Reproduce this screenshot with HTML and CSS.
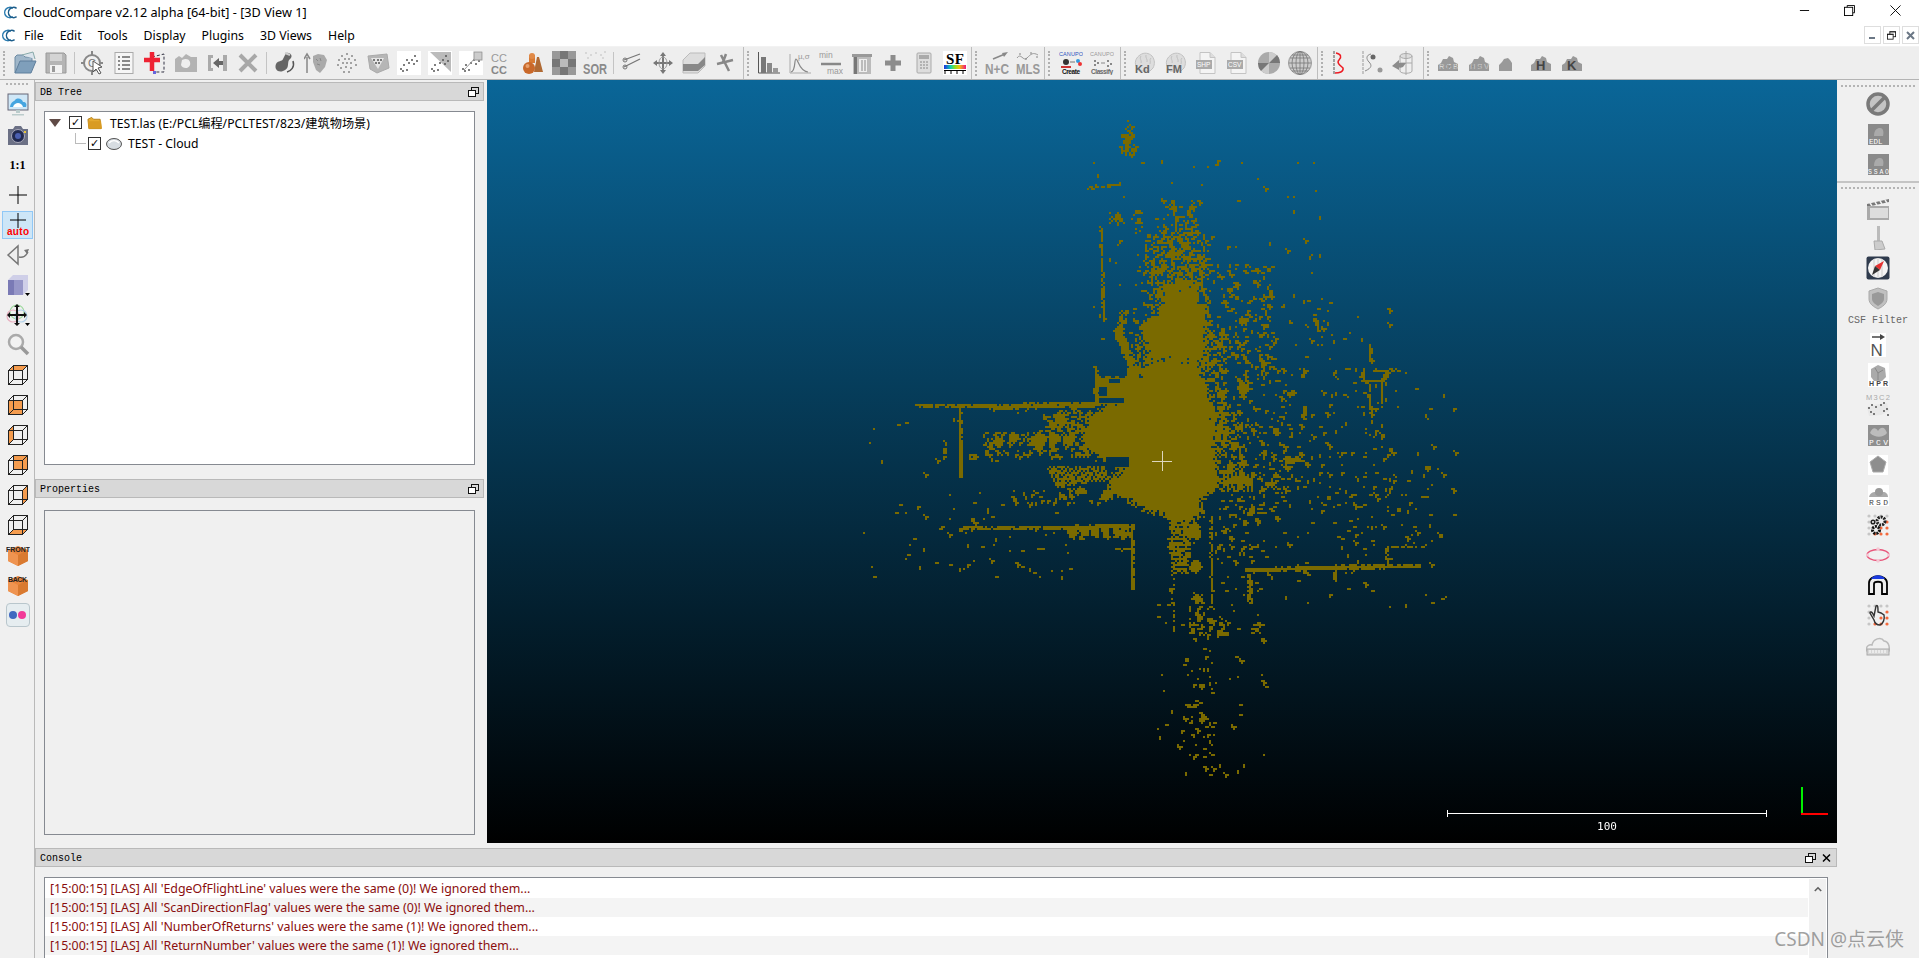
FILE: index.html
```html
<!DOCTYPE html>
<html lang="en">
<head>
<meta charset="utf-8">
<title>CloudCompare v2.12 alpha [64-bit] - [3D View 1]</title>
<link rel="stylesheet" href="styles.css">
</head>
<body>
<svg class="defs" width="0" height="0" aria-hidden="true">
  <defs>
    <g id="cc-logo"><path d="M10.500 3.500A5.500 5.500 0 1 0 10.500 12.500" fill="none" stroke="#2b7cb0" stroke-width="1.600"/><path d="M14.500 3.500A5.500 5.500 0 1 0 14.500 12.500" fill="none" stroke="#1c5d8a" stroke-width="1.600"/></g>
    <g id="wire" fill="none" stroke="#222" stroke-width="1"><rect x="2.5" y="7.5" width="14" height="14"/><rect x="7.5" y="2.5" width="14" height="14"/><path d="M2.5 7.5l5-5M16.5 7.5l5-5M2.5 21.5l5-5M16.5 21.5l5-5"/></g>
    <g id="float"><rect x="3.5" y="0.5" width="7" height="6" fill="none" stroke="#111"/><rect x="0.5" y="3.5" width="7" height="6" fill="#fff" stroke="#111"/><path d="M3 .5h8M0 3.5h8" stroke="#111"/></g>
    <g id="hexcube"><path d="M12 3l10 4v11l-10 5-10-5V7z" fill="#e8853c"/><path d="M12 12l10-5v11l-10 5z" fill="#d97a30"/><path d="M2 7l10 5v11l-10-5z" fill="#ef9450"/></g>
    <g id="dotcloud" fill="#555"><circle cx="4" cy="18" r="1"/><circle cx="7" cy="14" r="1"/><circle cx="6" cy="20" r="1"/><circle cx="10" cy="19" r="1"/><circle cx="12" cy="12" r="1"/><circle cx="15" cy="9" r="1"/><circle cx="18" cy="5" r="1"/><circle cx="20" cy="10" r="1"/><circle cx="17" cy="13" r="1"/></g>
    <g id="brain"><path d="M3 15c-2-5 1-9 4-11 4-3 9-2 12 1 3 4 3 8 1 12l-3 3H6z" fill="#ddd" stroke="#c2c2c2"/><path d="M8 5c-2 3 1 4 0 7M13 4c-1 3 2 4 1 7M18 7c-2 2 0 3-1 6" fill="none" stroke="#c2c2c2"/></g>
    <g id="doc"><path d="M5 1.5h10l5 5v16H5z" fill="#f4f4f4" stroke="#c4c4c4"/><path d="M15 1.5v5h5" fill="#ddd" stroke="#c4c4c4"/><rect x="1" y="9" width="16" height="9" fill="#aaa"/></g>
    <g id="tcloud"><path d="M2 20v-6l3-2 2-4 4 0 2-3 4 2 1 4 4 2v7z" fill="#999"/></g>
    <g id="dotgrid" fill="#c6c6c6"><circle cx="3" cy="3" r="1.6"/><circle cx="9" cy="3" r="1.6"/><circle cx="15" cy="3" r="1.6"/><circle cx="21" cy="3" r="1.6"/><circle cx="3" cy="9" r="1.6"/><circle cx="3" cy="15" r="1.6"/><circle cx="3" cy="21" r="1.6"/><circle cx="9" cy="21" r="1.6" fill="#f4693c"/><circle cx="15" cy="21" r="1.6" fill="#f4693c"/><circle cx="21" cy="21" r="1.6" fill="#f4693c"/><circle cx="21" cy="9" r="1.6" fill="#f4693c"/><circle cx="21" cy="15" r="1.6" fill="#f4693c"/><circle cx="15" cy="15" r="1.6" fill="#f4693c"/></g>
  </defs>
</svg>

<header class="titlebar">
  <svg class="logo" viewBox="0 0 16 16"><use href="#cc-logo"/></svg>
  <span class="title">CloudCompare v2.12 alpha [64-bit] - [3D View 1]</span>
  <div class="winbtns">
    <svg class="winbtn" viewBox="0 0 12 12"><path d="M1 6h10" stroke="#000" fill="none"/></svg>
    <svg class="winbtn" viewBox="0 0 12 12"><path d="M3.5 2.5v-2h8v8h-2" stroke="#000" fill="none"/><rect x="0.5" y="2.5" width="9" height="9" stroke="#000" fill="#fff"/></svg>
    <svg class="winbtn" viewBox="0 0 12 12"><path d="M.5.5l11 11M11.5.5l-11 11" stroke="#000" fill="none"/></svg>
  </div>
</header>

<nav class="menubar">
  <svg class="menu-logo" viewBox="0 0 16 16"><use href="#cc-logo"/></svg>
  <span class="menu-item">File</span>
  <span class="menu-item">Edit</span>
  <span class="menu-item">Tools</span>
  <span class="menu-item">Display</span>
  <span class="menu-item">Plugins</span>
  <span class="menu-item">3D Views</span>
  <span class="menu-item">Help</span>
  <div class="mdi">
    <span class="mdi-btn"><svg viewBox="0 0 9 9" class="mdi-ic"><path d="M1 7h6" stroke="#6b7785" stroke-width="2"/></svg></span>
    <span class="mdi-btn"><svg viewBox="0 0 11 10" class="mdi-ic"><use href="#float"/></svg></span>
    <span class="mdi-btn"><svg viewBox="0 0 9 9" class="mdi-ic"><path d="M1 1l7 7M8 1l-7 7" stroke="#6b7785" stroke-width="2"/></svg></span>
  </div>
</nav>

<div class="toolbar">
  <div class="tg tg-first">
    <span class="tb"><svg class="ic" viewBox="0 0 24 24"><path d="M2 22V6l2-2h6l2 2h7v4" fill="#9fb6c9" stroke="#6d8aa3"/><path d="M2 22l5-12h16l-5 12z" fill="#7f9fbb" stroke="#5f7f9c"/><path d="M9 4l11-3 2 7" fill="#dbe4ec" stroke="#8aa"/></svg></span>
    <span class="tb"><svg class="ic" viewBox="0 0 24 24"><path d="M2 2h18l2 2v18H2z" fill="#b5b5b5" stroke="#999"/><rect x="6" y="3" width="12" height="7" fill="#d4d4d4"/><rect x="6" y="14" width="12" height="8" fill="#f2f2f2"/><rect x="8" y="15" width="3" height="6" fill="#999"/></svg></span>
    <span class="tsep"></span>
    <span class="tb"><svg class="ic" viewBox="0 0 24 24"><circle cx="11" cy="12" r="8" fill="#f1f1f1" stroke="#888" stroke-width="2"/><path d="M11 0v5M11 19v5M0 12h4M18 12h4" stroke="#888" stroke-width="2"/><text x="7" y="16" font-size="11" fill="#777" class="st">C</text><path d="M12 10l9 6-4 1 3 5-2 1-3-5-3 3z" fill="#fff" stroke="#555"/></svg></span>
    <span class="tb"><svg class="ic" viewBox="0 0 24 24"><rect x="3" y="1.5" width="18" height="21" fill="#f6f6f6" stroke="#aaa"/><path d="M6 6h2M10 6h8M6 10h2M10 10h8M6 14h2M10 14h8M6 18h2M10 18h8" stroke="#666" stroke-width="1.5"/></svg></span>
    <span class="tb"><svg class="ic" viewBox="0 0 24 24"><path d="M9 6l12-3v18H11" fill="none" stroke="#334" stroke-dasharray="3 2"/><path d="M1 9h16" stroke="#ee2233" stroke-width="4.5"/><path d="M9 1v19" stroke="#ee2233" stroke-width="4.5"/><rect x="10" y="20" width="3" height="3" fill="#66d"/></svg></span>
    <span class="tb"><svg class="ic" viewBox="0 0 24 24"><path d="M1 21V8l4-3 3 2 4-4 5 3 6 0v15z" fill="#b3b3b3"/><path d="M8 9c6-3 9 1 8 5-2 5-8 3-9 0z" fill="#efefef"/></svg></span>
    <span class="tb"><svg class="ic" viewBox="0 0 24 24"><path d="M3 4h5v3H6v10h2v3H3zM18 4h4v16h-4z" fill="#aaa"/><path d="M8 12l6-5v3h4v4h-4v3z" fill="#666"/></svg></span>
    <span class="tb"><svg class="ic" viewBox="0 0 24 24"><path d="M4 4l16 16M20 4L4 20" stroke="#a8a8a8" stroke-width="4"/></svg></span>
    <span class="tsep"></span>
    <span class="tb"><svg class="ic" viewBox="0 0 24 24"><path d="M13 2c5-1 8 4 3 7-2 3 1 9-6 11-5 2-9-2-7-7 2-4 6-2 7-5z" fill="#666"/><path d="M20 10c2 6-2 10-6 11" fill="none" stroke="#555" stroke-width="1.5"/><path d="M12 2l5 2" stroke="#ccc" stroke-width="2"/></svg></span>
    <span class="tb"><svg class="ic" viewBox="0 0 24 24"><path d="M3 22V6M0 8l3-5 3 5" stroke="#888" stroke-width="1.5" fill="none"/><path d="M9 5l5-2 6 1 3 5-2 7-5 6-4-3-3-8z" fill="#aaa"/><path d="M12 8l2 2M16 7l1 3M13 13l3 1" stroke="#888"/></svg></span>
    <span class="tb"><svg class="ic" viewBox="0 0 24 24" fill="#888"><circle cx="12" cy="3" r="1"/><circle cx="7" cy="5" r="1"/><circle cx="17" cy="5" r="1"/><circle cx="4" cy="9" r="1"/><circle cx="10" cy="8" r="1"/><circle cx="14" cy="8" r="1"/><circle cx="20" cy="9" r="1"/><circle cx="3" cy="14" r="1"/><circle cx="8" cy="12" r="1"/><circle cx="12" cy="12" r="1"/><circle cx="16" cy="12" r="1"/><circle cx="21" cy="14" r="1"/><circle cx="6" cy="17" r="1"/><circle cx="11" cy="16" r="1"/><circle cx="16" cy="17" r="1"/><circle cx="9" cy="21" r="1"/><circle cx="14" cy="21" r="1"/></svg></span>
    <span class="tb"><svg class="ic" viewBox="0 0 24 24"><path d="M2 5l19-2 2 14-12 5-7-4z" fill="#b6b6b6" stroke="#aaa"/><path d="M5 7l13 0-6 11z" fill="#e6e6e6"/><g fill="#555"><circle cx="8" cy="9" r="1"/><circle cx="12" cy="9" r="1"/><circle cx="15" cy="9" r="1"/><circle cx="10" cy="12" r="1"/><circle cx="13" cy="12" r="1"/></g></svg></span>
    <span class="tb tb-white"><svg class="ic" viewBox="0 0 24 24"><use href="#dotcloud"/><circle cx="10" cy="9" r="1" fill="#555"/></svg></span>
    <span class="tb tb-white"><svg class="ic" viewBox="0 0 24 24"><path d="M2 1h21v20z" fill="#bbb"/><use href="#dotcloud"/></svg></span>
    <span class="tb tb-white"><svg class="ic" viewBox="0 0 24 24"><use href="#dotcloud"/><path d="M5 19L18 5" stroke="#999"/><rect x="15" y="1" width="8" height="8" fill="#ccc" stroke="#999"/></svg></span>
    <span class="tb"><svg class="ic" viewBox="0 0 24 24"><text x="1" y="11" font-size="11" class="st" fill="#999">CC</text><text x="1" y="23" font-size="11" class="st" fill="#888" font-weight="700">CC</text></svg></span>
    <span class="tb"><svg class="ic" viewBox="0 0 24 24"><path d="M13 21L16 6h2l4 15z" fill="#b06a34"/><path d="M8 4h6v8H8z" fill="#d87a34"/><circle cx="11" cy="5" r="3" fill="#e08a48"/><circle cx="8" cy="17" r="6" fill="#c9682a"/><circle cx="6.500" cy="15" r="2" fill="#e8a06c"/></svg></span>
    <span class="tb"><svg class="ic" viewBox="0 0 24 24"><rect width="24" height="24" fill="#999"/><path d="M8 0h8v8H8zM0 8h8v8H0zM16 8h8v8h-8zM8 16h8v8H8z" fill="#777"/><path d="M8 8h8v8H8z" fill="#bbb"/></svg></span>
    <span class="tb"><svg class="ic" viewBox="0 0 24 24"><g fill="#bbb"><circle cx="3" cy="2" r=".8"/><circle cx="8" cy="4" r=".8"/><circle cx="13" cy="2" r=".8"/><circle cx="18" cy="4" r=".8"/><circle cx="22" cy="1" r=".8"/><circle cx="5" cy="7" r=".8"/><circle cx="20" cy="7" r=".8"/></g><text x="0" y="23" font-size="14" class="st" font-weight="700" fill="#8a8a8a" textLength="24" lengthAdjust="spacingAndGlyphs">SOR</text></svg></span>
    <span class="tsep"></span>
    <span class="tb"><svg class="ic" viewBox="0 0 24 24"><path d="M4 9l16-6M4 16L20 8" stroke="#777" stroke-width="1.3" fill="none"/><circle cx="5" cy="9" r="2" fill="none" stroke="#777"/><circle cx="5" cy="16" r="2" fill="none" stroke="#777"/></svg></span>
    <span class="tb"><svg class="ic" viewBox="0 0 24 24"><path d="M12 1l3 4h-2v14h2l-3 4-3-4h2V5H9z" fill="#777"/><path d="M2 12l4-3v2h12V9l4 3-4 3v-2H6v2z" fill="#777"/><ellipse cx="12" cy="12" rx="4" ry="6" fill="none" stroke="#999"/></svg></span>
    <span class="tb"><svg class="ic" viewBox="0 0 24 24"><path d="M1 9l7-7h15v13l-7 7H1z" fill="#ddd" stroke="#bbb"/><path d="M1 13h15l7-7v8l-7 6H1z" fill="#888"/></svg></span>
    <span class="tb"><svg class="ic" viewBox="0 0 24 24"><path d="M8 4l8 16M4 13l16-4M13 3l-3 8" stroke="#888" stroke-width="2.5" fill="none"/></svg></span>
  </div>
  <div class="tg">
    <span class="tb"><svg class="ic" viewBox="0 0 24 24"><path d="M1.500 1v21H23" stroke="#555" fill="none"/><rect x="4" y="6" width="5" height="16" fill="#777"/><rect x="10" y="12" width="5" height="10" fill="#888"/><rect x="16" y="17" width="5" height="5" fill="#999"/></svg></span>
    <span class="tb"><svg class="ic" viewBox="0 0 24 24"><path d="M2 3v19h21" stroke="#aaa" fill="none"/><path d="M3 21c5-1 3-13 5-13s3 12 12 13" stroke="#888" fill="none" stroke-width="1.2"/><text x="10" y="8" font-size="8" fill="#999" class="st">µ,σ</text></svg></span>
    <span class="tb"><svg class="ic" viewBox="0 0 24 24"><text x="0" y="7" font-size="8.500" fill="#999" class="st">min</text><path d="M2 13h20" stroke="#888" stroke-width="2.500"/><text x="8" y="23" font-size="8.500" fill="#999" class="st">max</text></svg></span>
    <span class="tb"><svg class="ic" viewBox="0 0 24 24"><path d="M2 3h20v3H2z" fill="#999"/><path d="M3 6h18v17H3z" fill="#bbb"/><path d="M9 8h8v13H9z" fill="#eee"/><path d="M12 9v11M15 9v11" stroke="#888"/><path d="M4 6h3v17H4z" fill="#777"/></svg></span>
    <span class="tb"><svg class="ic" viewBox="0 0 24 24"><path d="M4 12h16M12 4v16" stroke="#8c8c8c" stroke-width="5"/></svg></span>
    <span class="tb"><svg class="ic" viewBox="0 0 24 24"><rect x="5" y="2" width="14" height="20" rx="1" fill="#ddd" stroke="#aaa"/><rect x="7" y="4" width="10" height="4" fill="#aaa"/><path d="M8 11h2M11 11h2M14 11h2M8 14h2M11 14h2M14 14h2M8 17h2M11 17h2M14 17h2" stroke="#888"/></svg></span>
    <span class="tb tb-white"><svg class="ic" viewBox="0 0 24 24"><text x="3" y="13" font-size="15" font-weight="700" class="ser" fill="#000" textLength="18">SF</text><defs><linearGradient id="rainbow"><stop offset="0" stop-color="#2030e0"/><stop offset=".3" stop-color="#10d0b0"/><stop offset=".5" stop-color="#90e020"/><stop offset=".7" stop-color="#f0c010"/><stop offset="1" stop-color="#f01080"/></linearGradient></defs><rect x="1" y="14" width="22" height="4" fill="url(#rainbow)"/><path d="M1 19.500h22M2 19v4M8 19v4M14 19v4M20 19v4" stroke="#000" fill="none"/></svg></span>
  </div>
  <div class="tg">
    <span class="tb"><svg class="ic" viewBox="0 0 24 24"><path d="M8 8l12-5" stroke="#888" stroke-width="1.500"/><path d="M23 1l-6 1 2 4z" fill="#888"/><text x="0" y="23" font-size="15" class="st" font-weight="700" fill="#999" textLength="24" lengthAdjust="spacingAndGlyphs">N+C</text></svg></span>
    <span class="tb"><svg class="ic" viewBox="0 0 24 24"><path d="M1 7c4-6 6 4 10 0s6-6 11-3" stroke="#999" fill="none"/><g fill="#777"><circle cx="4" cy="3" r=".8"/><circle cx="10" cy="8" r=".8"/><circle cx="15" cy="2" r=".8"/><circle cx="21" cy="6" r=".8"/></g><text x="0" y="23" font-size="15" class="st" font-weight="700" fill="#999" textLength="24" lengthAdjust="spacingAndGlyphs">MLS</text></svg></span>
  </div>
  <div class="tg tg-4">
    <span class="tb"><svg class="ic" viewBox="0 0 24 24"><text x="0" y="5" font-size="5.500" class="st" fill="#2f55c0" textLength="24">CANUPO</text><circle cx="7" cy="11" r="3" fill="#333"/><path d="M11 11h5" stroke="#777"/><circle cx="19" cy="10" r="2" fill="#39d"/><circle cx="21" cy="13" r="2" fill="#e33"/><rect x="2" y="15" width="10" height="2" fill="#c33"/><text x="3" y="23" font-size="6.500" class="st" font-weight="700" fill="#111" textLength="18">Create</text></svg></span>
    <span class="tb"><svg class="ic" viewBox="0 0 24 24"><text x="0" y="5" font-size="5.500" class="st" fill="#999" textLength="24">CANUPO</text><g fill="#666"><circle cx="5" cy="10" r="1"/><circle cx="8" cy="12" r="1"/><circle cx="5" cy="14" r="1"/><circle cx="18" cy="10" r="1"/><circle cx="21" cy="13" r="1"/><circle cx="18" cy="15" r="1"/></g><path d="M11 12h4" stroke="#888"/><text x="1" y="23" font-size="6.500" class="st" font-weight="700" fill="#666" textLength="22">Classify</text></svg></span>
  </div>
  <div class="tg tg-5">
    <span class="tb"><svg class="ic" viewBox="0 0 24 24"><use href="#brain"/><text x="2" y="22" font-size="11" class="st" font-weight="700" fill="#666">Kd</text></svg></span>
    <span class="tb"><svg class="ic" viewBox="0 0 24 24"><use href="#brain"/><text x="2" y="22" font-size="11" class="st" font-weight="700" fill="#666">FM</text></svg></span>
    <span class="tb"><svg class="ic" viewBox="0 0 24 24"><use href="#doc"/><text x="2" y="16" font-size="6.500" class="st" fill="#fff">SHP</text></svg></span>
    <span class="tb"><svg class="ic" viewBox="0 0 24 24"><use href="#doc"/><text x="2" y="16" font-size="6.500" class="st" fill="#fff">CSV</text></svg></span>
    <span class="tb"><svg class="ic" viewBox="0 0 24 24"><circle cx="12" cy="12" r="11" fill="#aaa"/><path d="M12 12V1a11 11 0 0 1 11 11zM12 12v11a11 11 0 0 1-11-11z" fill="#ccc"/><path d="M12 12l8-8a11 11 0 0 1 3 8zM12 12l-8 8a11 11 0 0 1-3-8z" fill="#777"/></svg></span>
    <span class="tb"><svg class="ic" viewBox="0 0 24 24"><circle cx="12" cy="12" r="11.500" fill="#ccc" stroke="#999"/><g fill="none" stroke="#777" stroke-width=".8"><ellipse cx="12" cy="12" rx="8" ry="11.500"/><ellipse cx="12" cy="12" rx="4" ry="11.500"/><path d="M12 .5v23M1 12h22M2 7h20M2 17h20M4 4h16M4 20h16"/></g></svg></span>
  </div>
  <div class="tg tg-6">
    <span class="tb"><svg class="ic" viewBox="0 0 24 24"><path d="M5 0v24" stroke="#555" stroke-dasharray="3 1"/><path d="M7 2c5 1 6 4 3 7s2 6 4 8c1 4-4 5-8 5" stroke="#ee1a22" stroke-width="1.500" fill="none"/></svg></span>
    <span class="tb"><svg class="ic" viewBox="0 0 24 24"><path d="M3 0v24" stroke="#999" stroke-dasharray="3 1"/><path d="M11 3C6 4 6 8 9 11s3 6-4 9" stroke="#888" fill="none"/><circle cx="13" cy="6" r="2.500" fill="#666"/><circle cx="20" cy="19" r="2.500" fill="#999"/></svg></span>
    <span class="tb"><svg class="ic" viewBox="0 0 24 24"><ellipse cx="15" cy="5" rx="6" ry="2.500" fill="#ddd" stroke="#aaa"/><path d="M9 5v15c0 3 12 3 12 0V5M15 0v24M9 12h12" fill="none" stroke="#aaa"/><path d="M1 15l7-6v3h7l-3 4c-2 1-4 1-4 0v3z" fill="#8c8c8c"/></svg></span>
  </div>
  <div class="tg tg-7">
    <span class="tb"><svg class="ic" viewBox="0 0 24 24"><use href="#tcloud"/><text x="3" y="18" font-size="7.500" class="st" fill="#fff" stroke="#555" stroke-width=".2" textLength="19">RGB</text></svg></span>
    <span class="tb"><svg class="ic" viewBox="0 0 24 24"><use href="#tcloud"/><text x="3" y="18" font-size="7.500" class="st" fill="#fff" stroke="#555" stroke-width=".2" textLength="19">HSV</text></svg></span>
    <span class="tb"><svg class="ic" viewBox="0 0 24 24"><path d="M1 20v-6l3-3 2-3 4-1 2 2 2 3v8z" fill="#999"/><path d="M15 12h3l3 3v5h-6z" fill="#eee"/></svg></span>
    <span class="tb"><svg class="ic" viewBox="0 0 24 24"><use href="#tcloud"/><text x="7" y="19" font-size="13" class="st" font-weight="700" fill="#444">H</text></svg></span>
    <span class="tb"><svg class="ic" viewBox="0 0 24 24"><use href="#tcloud"/><text x="7" y="19" font-size="13" class="st" font-weight="700" fill="#444">K</text></svg></span>
  </div>
</div>

<div class="workspace">
  <aside class="lbar">
    <span class="hdots"></span>
    <span class="lb"><svg class="ic" viewBox="0 0 24 24"><rect x="2" y="1" width="20" height="16" fill="#cfe7f7" stroke="#667"/><path d="M4 14c1-6 4-5 5-7 3-3 7-1 8 2 3 0 4 2 3 5z" fill="#45a5e0"/><path d="M7 14c1-3 3-4 5-4s4 1 5 4z" fill="#fff"/><path d="M10 17h4v3h-4zM6 21h12v1.500H6z" fill="#bcc"/></svg></span>
    <span class="lb"><svg class="ic" viewBox="0 0 24 24"><path d="M2 6h5l2-3h6l2 3h5v16H2z" fill="#6b7085"/><circle cx="12" cy="13" r="6.500" fill="#222a50" stroke="#aab"/><circle cx="12" cy="13" r="3" fill="#4b5fb0"/><rect x="18" y="8" width="2" height="2" fill="#e9c63a"/></svg></span>
    <span class="lb lb-text">1:1</span>
    <span class="lb"><svg class="ic" viewBox="0 0 24 24"><path d="M12 3v18M3 12h18" stroke="#000"/></svg></span>
    <span class="lb lb-on"><svg class="ic" viewBox="0 0 24 24"><path d="M12 0v15M4 7h16" stroke="#000"/><text x="1" y="22" font-size="10" font-weight="700" class="st" fill="#f00" textLength="22">auto</text></svg></span>
    <span class="lb"><svg class="ic" viewBox="0 0 24 24"><path d="M2 12L12 3v18z" fill="#eee" stroke="#777" stroke-width="1.500"/><path d="M13 14c4 1 7-1 9-5" stroke="#777" fill="none" stroke-width="1.300"/><path d="M23 6l-5 1 3 4z" fill="#777"/></svg></span>
    <span class="lb lb-more"><svg class="ic" viewBox="0 0 24 24"><path d="M2 7l5-5h15v15l-5 5H2z" fill="#cfcfe8"/><path d="M2 7h15v15H2z" fill="#9797c8"/><path d="M2 7h6v15H2z" fill="#7a7ab5"/><path d="M19 20h5l-2.500 3z" fill="#000"/></svg></span>
    <span class="lb lb-more"><svg class="ic" viewBox="0 0 24 24"><circle cx="11" cy="9" r="7" fill="none" stroke="#9ed99e" stroke-width="1.200"/><circle cx="7" cy="13" r="6" fill="none" stroke="#e8b0c0" stroke-width="1.200"/><circle cx="15" cy="13" r="6" fill="none" stroke="#b0d0e8" stroke-width="1.200"/><path d="M11 3v18M3 12h16" stroke="#111" stroke-width="2"/><path d="M11 1l3 3H8zM11 23l3-3H8zM1 12l3-3v6zM21 12l-3-3v6z" fill="#111"/><path d="M19 20h5l-2.500 3z" fill="#000"/></svg></span>
    <span class="lb"><svg class="ic" viewBox="0 0 24 24"><circle cx="10" cy="9" r="7" fill="#f2f2f2" stroke="#aaa" stroke-width="2.500"/><path d="M15 14l7 7" stroke="#999" stroke-width="3.500"/></svg></span>
    <span class="lb"><svg class="ic" viewBox="0 0 24 24"><path d="M2.500 7.500l5-5h14l-5 5z" fill="#f59c4e"/><use href="#wire"/></svg></span>
    <span class="lb"><svg class="ic" viewBox="0 0 24 24"><rect x="2.500" y="7.500" width="14" height="14" fill="#f59c4e"/><use href="#wire"/></svg></span>
    <span class="lb"><svg class="ic" viewBox="0 0 24 24"><path d="M2.500 7.500l5-5v14l-5 5z" fill="#f59c4e"/><use href="#wire"/></svg></span>
    <span class="lb"><svg class="ic" viewBox="0 0 24 24"><rect x="7.500" y="2.500" width="14" height="14" fill="#f59c4e"/><use href="#wire"/></svg></span>
    <span class="lb"><svg class="ic" viewBox="0 0 24 24"><path d="M16.500 7.500l5-5v14l-5 5z" fill="#f59c4e"/><use href="#wire"/></svg></span>
    <span class="lb"><svg class="ic" viewBox="0 0 24 24"><path d="M2.500 21.500l5-5h14l-5 5z" fill="#f59c4e"/><use href="#wire"/></svg></span>
    <span class="lb"><svg class="ic" viewBox="0 0 24 24"><use href="#hexcube"/><text x="0" y="9" font-size="7" font-weight="700" class="st" fill="#222" textLength="24">FRONT</text></svg></span>
    <span class="lb"><svg class="ic" viewBox="0 0 24 24"><use href="#hexcube"/><text x="2" y="9" font-size="7" font-weight="700" class="st" fill="#222" textLength="19">BACK</text></svg></span>
    <span class="lb"><span class="flickr"><i class="fl-blue"></i><i class="fl-pink"></i></span></span>
  </aside>

  <div class="center">
    <div class="upper">
      <div class="dock">
        <div class="dock-title"><span>DB Tree</span><svg class="float" viewBox="0 0 11 10"><use href="#float"/></svg></div>
        <div class="tree">
          <div class="tree-row">
            <span class="arrow"></span>
            <span class="check">✓</span>
            <svg class="tree-ic" viewBox="0 0 16 14"><path d="M1 3l4-2 2 2h7l1 10H2z" fill="#e4a92f" stroke="#b37f1a"/><path d="M1 5h14l1 8H2z" fill="#d99b22"/></svg>
            <span class="tree-text">TEST.las (E:/PCL编程/PCLTEST/823/建筑物场景)</span>
          </div>
          <div class="tree-row tree-child">
            <span class="branch"></span>
            <span class="check">✓</span>
            <svg class="tree-ic tree-ic-cloud" viewBox="0 0 16 12"><ellipse cx="8" cy="6" rx="7.500" ry="5.500" fill="#d7dde2" stroke="#555"/><path d="M3 5c3-3 7-3 10 0" fill="none" stroke="#fff" stroke-width="1.500"/></svg>
            <span class="tree-text">TEST - Cloud</span>
          </div>
        </div>
        <div class="dock-title dock-title-2"><span>Properties</span><svg class="float" viewBox="0 0 11 10"><use href="#float"/></svg></div>
        <div class="props"></div>
      </div>
      <main class="view">
        <canvas id="cloud" width="1350" height="763"></canvas>
        <svg class="crosshair" viewBox="0 0 20 20"><path d="M0 10.500h20M10.500 0v20" stroke="#ddd6bd"/></svg>
        <div class="scale"><div class="scale-bar"></div><span class="scale-label">100</span></div>
        <div class="axis"><i class="axis-y"></i><i class="axis-x"></i></div>
      </main>
    </div>
    <section class="console">
      <div class="dock-title"><span>Console</span>
        <span class="con-btns"><svg class="float" viewBox="0 0 11 10"><use href="#float"/></svg><svg class="float" viewBox="0 0 10 10"><path d="M1.500 1.500l7 7M8.500 1.500l-7 7" stroke="#000" stroke-width="1.500"/></svg></span>
      </div>
      <div class="log">
        <div class="log-rows">
          <div class="log-row">[15:00:15] [LAS] All 'EdgeOfFlightLine' values were the same (0)! We ignored them...</div>
          <div class="log-row log-alt">[15:00:15] [LAS] All 'ScanDirectionFlag' values were the same (0)! We ignored them...</div>
          <div class="log-row">[15:00:15] [LAS] All 'NumberOfReturns' values were the same (1)! We ignored them...</div>
          <div class="log-row log-alt">[15:00:15] [LAS] All 'ReturnNumber' values were the same (1)! We ignored them...</div>
        </div>
        <div class="scrollbar"><svg class="chev" viewBox="0 0 10 7"><path d="M1 6l4-4 4 4" fill="none" stroke="#606060" stroke-width="2"/></svg></div>
      </div>
    </section>
  </div>

  <aside class="rbar">
    <span class="hdots hdots-r"></span>
    <span class="rb"><svg class="ic" viewBox="0 0 24 24"><circle cx="12" cy="12" r="10" fill="#c4c4c4" stroke="#7a7a7a" stroke-width="3.500"/><path d="M5 19L19 5" stroke="#7a7a7a" stroke-width="3.500"/></svg></span>
    <span class="rb"><svg class="ic ic-21" viewBox="0 0 21 21"><rect width="21" height="21" fill="#8a8a8a"/><path d="M6 12c0-6 3-8 6-8s4 3 3 8z" fill="#aaa"/><text x="1" y="20" font-size="7.500" class="mono" fill="#fff">EDL</text></svg></span>
    <span class="rb"><svg class="ic ic-21" viewBox="0 0 21 21"><rect width="21" height="21" fill="#8a8a8a"/><path d="M6 12c0-6 3-8 6-8s4 3 3 8z" fill="#aaa"/><text x="0" y="20" font-size="6.500" class="mono" fill="#fff" textLength="21">SSAO</text></svg></span>
    <span class="rsep"></span>
    <span class="hdots hdots-r hdots-r2"></span>
    <span class="rb"><svg class="ic" viewBox="0 0 24 24"><path d="M1 8L23 3v3L1 11z" fill="#777"/><path d="M4 7l2 3M9 6l2 3M14 5l2 3M19 4l2 3" stroke="#eee" stroke-width="1.500"/><rect x="1" y="10" width="22" height="14" fill="#aaa"/><rect x="4" y="12" width="18" height="10" fill="#ddd"/></svg></span>
    <span class="rb"><svg class="ic" viewBox="0 0 24 24"><rect x="11" y="0" width="3" height="15" fill="#bbb"/><path d="M8 15h8l3 8-10 1z" fill="#ccc" stroke="#aaa"/></svg></span>
    <span class="rb"><svg class="ic" viewBox="0 0 24 24"><rect x="0.500" y="0.500" width="23" height="23" rx="2" fill="#2f3b4d"/><circle cx="12" cy="12" r="10" fill="#f4f4f4"/><path d="M8 3v18M12 2v20M16 3v18" stroke="#ccc"/><path d="M18 5l-4 9-5-4z" fill="#e53030"/><path d="M6 19l3-9 5 4z" fill="#333"/></svg></span>
    <span class="rb"><svg class="ic" viewBox="0 0 24 24"><path d="M12 2l9 3v8c0 5-5 8-9 10-4-2-9-5-9-10V5z" fill="#c0c0c0" stroke="#aaa"/><path d="M12 6l6 2v5c0 3-3 5-6 7-3-2-6-4-6-7V8z" fill="#999"/></svg></span>
    <span class="rb-text">CSF Filter</span>
    <span class="rb"><svg class="ic" viewBox="0 0 24 24"><rect x="4" y="0" width="16" height="24" fill="#fff"/><path d="M6 4h9" stroke="#444" stroke-width="1.500"/><path d="M19 4l-5-3v6z" fill="#444"/><text x="4.500" y="23" font-size="17" class="st" fill="#555">N</text></svg></span>
    <span class="rb"><svg class="ic" viewBox="0 0 24 24"><rect x="2" y="0" width="21" height="24" fill="#fff"/><path d="M5 6l7-4 7 3 1 9-4 4H8l-3-4z" fill="#aaa"/><path d="M9 5l3 5 5-3M12 10v7" stroke="#888" fill="none"/><text x="3" y="23" font-size="7" font-weight="700" class="st" fill="#444" textLength="19">HPR</text></svg></span>
    <span class="rb"><svg class="ic" viewBox="0 0 24 24"><text x="0" y="7" font-size="7.500" class="st" fill="#aaa" textLength="24">M3C2</text><path d="M1 14l12-3 8-1 2 8-8 4-12 1z" fill="#e8e8e8"/><g fill="#555"><circle cx="3" cy="15" r="1"/><circle cx="6" cy="12" r="1"/><circle cx="10" cy="14" r="1"/><circle cx="5" cy="19" r="1"/><circle cx="8" cy="21" r="1"/><circle cx="15" cy="12" r="1"/><circle cx="18" cy="10" r="1"/><circle cx="21" cy="16" r="1"/><circle cx="18" cy="18" r="1"/><circle cx="22" cy="22" r="1"/></g></svg></span>
    <span class="rb"><svg class="ic ic-21" viewBox="0 0 21 21"><rect width="21" height="21" fill="#8f8f8f"/><path d="M2 8c2-6 6-6 8-2 3-5 7-4 9 2-4 5-12 5-17 0z" fill="#bcbcbc"/><text x="1" y="20" font-size="8" class="mono" fill="#fff" textLength="19">PCV</text></svg></span>
    <span class="rb"><svg class="ic ic-20" viewBox="0 0 20 20"><rect width="20" height="20" fill="#fff"/><path d="M10 1l8 6-3 10H5L2 7z" fill="#8e8e8e" stroke="#aaa"/></svg></span>
    <span class="rb"><svg class="ic ic-21" viewBox="0 0 21 21"><rect width="21" height="21" fill="#fff"/><path d="M1 12c1-4 4-5 6-5 1-3 6-5 8 0 3 0 5 2 5 5z" fill="#aaa"/><circle cx="11" cy="7" r="4" fill="#999"/><text x="1" y="20" font-size="8" class="mono" fill="#444" textLength="19">RSD</text></svg></span>
    <span class="rb"><svg class="ic" viewBox="0 0 24 24"><use href="#dotgrid"/><circle cx="15" cy="8" r="4" fill="none" stroke="#222" stroke-width="3" stroke-dasharray="2 1"/><circle cx="10" cy="17" r="3.500" fill="none" stroke="#111" stroke-width="3" stroke-dasharray="2 1"/><circle cx="7" cy="9" r="1.800" fill="none" stroke="#222" stroke-width="1.500"/></svg></span>
    <span class="rb"><svg class="ic" viewBox="0 0 24 24"><ellipse cx="12" cy="12" rx="11" ry="5.500" fill="none" stroke="#e8557a" stroke-width="1.300"/><g fill="#f4c8d4"><circle cx="12" cy="6" r="1.800"/><circle cx="12" cy="18" r="1.800"/><circle cx="1.500" cy="12" r="1.500"/><circle cx="22.500" cy="12" r="1.500"/></g></svg></span>
    <span class="rb"><svg class="ic" viewBox="0 0 24 24"><path d="M3 21V10c0-9 18-9 18 0v11h-5V11c0-3-8-3-8 0v10z" fill="#eee" stroke="#000" stroke-width="1.800"/><path d="M5 6c3-5 11-5 14 0z" fill="#1a3be0"/></svg></span>
    <span class="rb"><svg class="ic" viewBox="0 0 24 24"><use href="#dotgrid"/><path d="M10 3c2-2 2 2 2 6l3 1 3 2c1 4-1 9-4 10-3 0-5-1-6-5L4 10c0-2 2-1 3 1l1 2z" fill="none" stroke="#333" stroke-width="1.400"/></svg></span>
    <span class="rb"><svg class="ic" viewBox="0 0 24 24"><path d="M1 18c-2-5 3-7 5-6 1-6 9-9 12-4 4 0 6 5 5 10z" fill="#f0f0f0" stroke="#bbb" stroke-width="1.500"/><rect x="1" y="16" width="22" height="6" fill="#d6d6d6" stroke="#aaa"/><path d="M4 17v3M7 17v3M10 17v3M13 17v3M16 17v3M19 17v3" stroke="#fff"/></svg></span>
  </aside>
</div>

<span class="watermark">CSDN @点云侠</span>
<script src="script.js"></script>
</body>
</html>
```
FILE: styles.css
```css
* { box-sizing: border-box; }
html, body { margin: 0; height: 958px; overflow: hidden; background: #fff; }
body {
  display: flex; flex-direction: column; position: relative;
  font: 12.4px "Noto Sans", "Noto Sans CJK SC", sans-serif; color: #000;
}
.defs { position: absolute; }
.st { font-family: "Liberation Sans", sans-serif; }
.ser { font-family: "Liberation Serif", serif; }
.mono { font-family: "Liberation Mono", monospace; }

.titlebar { height: 24px; display: flex; align-items: center; padding-left: 3px; background: #fff; }
.logo { width: 15px; height: 15px; margin-right: 5px; }
.title { font-size: 12.7px; }
.winbtns { margin-left: auto; display: flex; margin-top: -4px; }
.winbtn { width: 11px; height: 11px; margin: 0 19px 0 15px; }
.winbtn:last-child { margin-right: 18px; margin-left: 16px; }

.menubar { height: 22px; display: flex; align-items: center; padding-left: 1px; background: #fff; }
.menu-logo { width: 15px; height: 15px; }
.menu-item { padding: 0 8px; font-size: 12.3px; }
.mdi { margin-left: auto; display: flex; gap: 2px; }
.mdi-btn { width: 17px; height: 18px; border: 1px solid #dedede; display: flex; align-items: center; justify-content: center; }
.mdi-ic { width: 9px; height: 9px; }

.toolbar { height: 34px; display: flex; background: #eee; border-top: 1px solid #f2f2f2; border-bottom: 1px solid #b4b4b4; }
.tg { position: relative; display: flex; padding: 0 1px 0 9px; border-right: 1px solid #bdbdbd; }
.tg::before { content: ""; position: absolute; left: 3px; top: 4px; bottom: 3px; border-left: 2px dotted #b0b0b0; }
.tg-first { padding-right: 3px; }
.tg-4 { padding: 0 3px 0 10px; }
.tg-5 { padding: 0 2px 0 8px; }
.tg-6 { padding: 0 5px 0 7px; }
.tg-7 { padding: 0 0 0 8px; border-right: 0; }
.tb { width: 31px; display: flex; align-items: center; justify-content: center; }
.tsep { width: 6px; position: relative; }
.tsep::after { content: ""; position: absolute; left: 3px; top: 5px; bottom: 5px; border-left: 1px solid #c4c4c4; }
.tb-white .ic { background: #fff; }
.ic { width: 24px; height: 24px; display: block; flex: none; }
.ic-21 { width: 21px; height: 21px; }
.ic-20 { width: 20px; height: 20px; }

.workspace { flex: 1; min-height: 0; display: flex; background: #f0f0f0; }
.lbar { width: 35px; flex: none; border-right: 1px solid #b9b9b9; display: flex; flex-direction: column; align-items: center; padding-top: 3px; }
.hdots { width: 22px; height: 7px; flex: none; border-top: 2px dotted #b4b4b4; }
.lb { width: 31px; height: 30px; flex: none; display: flex; align-items: center; justify-content: center; margin-left: 1px; }
.lb-text { font: 700 12px "Liberation Serif", serif; }
.lb-on { background: #cde6f7; border: 1px solid #90c8f6; height: 28px; margin: 1px 0 1px 1px; }
.flickr { width: 24px; height: 24px; border: 1px solid #b9c6cc; border-radius: 4px; background: #e6edf0; display: flex; align-items: center; justify-content: center; gap: 1px; }
.fl-blue, .fl-pink { width: 8px; height: 8px; border-radius: 50%; display: block; }
.fl-blue { background: #4069c0; }
.fl-pink { background: #f13a98; }

.center { flex: 1; min-width: 0; display: flex; flex-direction: column; }
.upper { height: 763px; flex: none; display: flex; }
.dock { width: 452px; flex: none; padding: 2px 3px 0 0; display: flex; flex-direction: column; }
.dock-title {
  height: 19px; flex: none; display: flex; align-items: center; justify-content: space-between;
  background: #d8d8d8; border: 1px solid #b9b9b9; padding: 1px 4px 0 4px;
  font: 10px "Liberation Mono", monospace;
}
.dock-title-2 { margin-top: 14px; }
.float { width: 11px; height: 10px; display: block; }
.tree { height: 354px; flex: none; margin: 10px 9px 0 9px; background: #fff; border: 1px solid #868a91; }
.props { height: 325px; flex: none; margin: 12px 9px 0 9px; background: #f0f0f0; border: 1px solid #868a91; }
.tree-row { height: 21px; display: flex; align-items: center; padding-left: 4px; font-size: 12.2px; }
.tree-child { padding-left: 30px; }
.arrow { width: 0; height: 0; border-style: solid; border-width: 8px 6px 0; border-color: #5f4a46 transparent transparent; margin-right: 8px; }
.check { width: 13px; height: 13px; border: 1px solid #333; background: #fff; font: 11px/11px "DejaVu Sans", sans-serif; text-align: center; margin-right: 5px; flex: none; }
.tree-ic { width: 15px; height: 14px; margin-right: 8px; flex: none; }
.tree-ic-cloud { width: 16px; height: 12px; margin-right: 6px; }
.tree-text { white-space: nowrap; }
.branch { width: 11px; height: 11px; border-left: 1px solid #bbb; border-bottom: 1px solid #bbb; margin: -10px 2px 0 0; flex: none; }

.view { flex: 1; min-width: 0; position: relative; overflow: hidden; background: linear-gradient(#0a6698, #000); }
#cloud { display: block; }
.crosshair { position: absolute; left: 665px; top: 371px; width: 20px; height: 20px; }
.scale { position: absolute; left: 960px; top: 730px; width: 320px; text-align: center; }
.scale-bar { height: 7px; border-left: 1px solid #fff; border-right: 1px solid #fff; background: linear-gradient(#fff, #fff) center / 100% 1px no-repeat; }
.scale-label { display: block; margin-top: 3px; color: #fff; font: 11px/13px "DejaVu Sans Mono", monospace; }
.axis { position: absolute; left: 1314px; top: 707px; width: 27px; height: 28px; }
.axis-y { position: absolute; left: 0; top: 0; width: 2px; height: 26px; background: #00f000; }
.axis-x { position: absolute; left: 0; top: 26px; width: 27px; height: 2px; background: #f00; }

.console { flex: 1; min-height: 0; padding-top: 5px; overflow: hidden; }
.con-btns { display: flex; gap: 5px; }
.log { margin: 10px 9px 0 9px; height: 90px; background: #fff; border: 1px solid #868a91; border-bottom: 0; padding: 1px 1px 0 0; display: flex; color: #8a0e0e; }
.log-rows { flex: 1; min-width: 0; }
.log-row { height: 19px; line-height: 20px; padding-left: 5px; white-space: nowrap; }
.log-alt { background: #f4f4f4; }
.scrollbar { width: 17px; margin-left: 1px; background: #f0f0f0; display: flex; justify-content: center; padding-top: 7px; }
.chev { width: 8px; height: 6px; display: block; }

.rbar { width: 82px; flex: none; display: flex; flex-direction: column; align-items: center; padding-top: 5px; }
.hdots-r { width: 74px; height: 4px; border-top: 2px dotted #b4b4b4; }
.hdots-r2 { height: 6px; }
.rb { height: 30px; width: 100%; flex: none; display: flex; align-items: center; justify-content: center; }
.rsep { width: 100%; height: 2px; margin: 2px 0 4px; background: #c4c4c4; flex: none; }
.rb-text { height: 18px; font: 10px/18px "Liberation Mono", monospace; color: #666; flex: none; margin-top: -1px; }

.watermark { position: absolute; right: 15px; top: 926px; font: 19px/26px "Noto Sans", "Noto Sans CJK SC", sans-serif; color: rgba(120,120,120,.7); }
```
FILE: script.js
```js
(function () {
  var cv = document.getElementById('cloud');
  var ctx = cv.getContext('2d');
  var OX = 487, OY = 80;
  var seed = 12345;
  function R() { seed = (seed * 1664525 + 1013904223) >>> 0; return seed / 4294967296; }
  function G() { return (R() + R() + R() + R() - 2) / 1.15; }
  var Z = function (x, y) { return [860 + x / 2.613, 300 + y / 3]; };
  var O = function (x, y) { return [x * 1.2238, y * 1.2235]; };
  ctx.fillStyle = '#7a6a00';
  function dot(x, y, s) {
    s = s || 2;
    ctx.fillRect(Math.round((x - OX) / 2) * 2, Math.round((y - OY) / 2) * 2, s, s);
  }
  function poly(m, pts, noise) {
    var a = pts.map(function (p) { return m(p[0], p[1]); });
    var p = new Path2D();
    a.forEach(function (q, i) { if (i) p.lineTo(q[0] - OX, q[1] - OY); else p.moveTo(q[0] - OX, q[1] - OY); });
    p.closePath();
    var xs = a.map(function (q) { return q[0] - OX; }), ys = a.map(function (q) { return q[1] - OY; });
    var n = noise === undefined ? 3 : noise;
    var x0 = Math.min.apply(null, xs) - n - 2, x1 = Math.max.apply(null, xs) + n + 2;
    var y0 = Math.min.apply(null, ys) - n - 2, y1 = Math.max.apply(null, ys) + n + 2;
    for (var y = Math.floor(y0 / 2) * 2; y < y1; y += 2) {
      for (var x = Math.floor(x0 / 2) * 2; x < x1; x += 2) {
        if (ctx.isPointInPath(p, x + 1 + (R() - .5) * n * 2, y + 1 + (R() - .5) * n * 2)) ctx.fillRect(x, y, 2, 2);
      }
    }
  }
  function line(m, x1, y1, x2, y2, w, density) {
    var a = m(x1, y1), b = m(x2, y2);
    var len = Math.hypot(b[0] - a[0], b[1] - a[1]);
    var n = Math.ceil(len);
    density = density === undefined ? 1 : density;
    for (var i = 0; i <= n; i++) {
      if (R() > density) continue;
      var t = i / n;
      for (var k = 0; k < Math.max(1, w / 2); k++) {
        var jx = (R() - .5) * (b[1] - a[1]) / len * w, jy = (R() - .5) * (b[0] - a[0]) / len * w;
        dot(a[0] + (b[0] - a[0]) * t + jx, a[1] + (b[1] - a[1]) * t + jy);
      }
    }
  }
  function blob(m, cx, cy, rx, ry, n) {
    var c = m(cx, cy), e = m(cx + rx, cy + ry);
    var sx = Math.abs(e[0] - c[0]), sy = Math.abs(e[1] - c[1]);
    for (var i = 0; i < n; i++) dot(c[0] + G() * sx, c[1] + G() * sy);
  }
  function scatter(m, x0, y0, x1, y1, n) {
    var a = m(x0, y0), b = m(x1, y1);
    for (var i = 0; i < n; i++) {
      var x = a[0] + R() * (b[0] - a[0]), y = a[1] + R() * (b[1] - a[1]);
      dot(x, y);
      if (R() < .4) dot(x + 2, y);
      if (R() < .3) dot(x, y + 2);
      if (R() < .12) { dot(x + 2, y + 2); dot(x + 4, y + 2); dot(x + 2, y + 4); }
    }
  }
  function hole(m, x0, y0, x1, y1) {
    var a = m(x0, y0), b = m(x1, y1);
    ctx.clearRect(a[0] - OX, a[1] - OY, b[0] - a[0], b[1] - a[1]);
  }

  /* sparse background of stray returns */
  scatter(O, 890, 130, 1080, 300, 110);
  scatter(O, 925, 215, 1040, 300, 300);
  scatter(O, 1000, 300, 1190, 500, 150);
  scatter(O, 700, 330, 890, 480, 45);
  scatter(O, 945, 470, 1035, 635, 70);
  scatter(O, 968, 490, 992, 625, 70);
  scatter(Z, 940, -20, 1400, 640, 130);
  scatter(Z, 940, 200, 1120, 640, 150);

  /* north part */
  blob(O, 920, 115, 4, 10, 60);
  scatter(O, 915, 98, 928, 126, 18);
  line(O, 899, 185, 901, 258, 1.5, .7);
  line(O, 888, 153, 916, 150, 1.5, .6);
  blob(O, 912, 178, 6, 5, 30);
  blob(O, 930, 178, 4, 10, 24);
  line(Z, 672, 90, 722, 225, 10);
  line(Z, 690, 30, 672, 110, 8, .8);
  blob(Z, 755, 90, 18, 22, 420);
  blob(Z, 880, 60, 16, 40, 300);
  poly(Z, [[735,195],[745,90],[790,-20],[840,-70],[885,-40],[905,70],[910,200]], 9);
  scatter(Z, 740, -200, 910, 0, 260);
  scatter(Z, 790, -300, 880, -100, 140);
  line(Z, 634, 0, 636, 60, 2);
  blob(Z, 1000, 260, 10, 20, 110);
  blob(Z, 1160, 335, 5, 16, 50);
  blob(Z, 1085, 392, 9, 8, 46);
  blob(Z, 1050, 195, 5, 10, 20);
  blob(Z, 1000, 60, 14, 10, 30);
  scatter(Z, 905, 100, 950, 420, 150);
  scatter(Z, 925, 330, 1000, 520, 110);

  /* central mass */
  poly(Z, [[735,195],[800,180],[880,190],[905,240],[920,320],[925,420],[935,490],[945,560],[900,590],[890,620],[850,640],[790,610],[730,595],[690,590],[640,590],[650,530],[700,510],[740,490],[700,488],[705,455],[740,440],[690,462],[620,450],[590,425],[600,370],[620,330],[700,310],[730,290]], 4);
  poly(O, [[888,340],[930,322],[950,330],[950,400],[900,375],[885,365]], 5);
  poly(O, [[905,395],[950,385],[985,420],[960,425],[930,415]], 4);
  poly(Z, [[615,205],[622,232],[695,232],[700,195],[720,205],[738,260],[735,305],[622,318],[615,290]], 1);
  hole(Z, 622, 262, 645, 288);
  hole(Z, 650, 238, 680, 250);
  hole(Z, 625, 295, 690, 308);
  hole(Z, 642, 472, 703, 500);
  line(Z, 615, 200, 615, 312, 3);

  /* west arm */
  line(Z, 145, 312, 350, 318, 2.500, .8);
  line(Z, 350, 318, 610, 310, 5);
  line(Z, 258, 320, 262, 530, 2.500);
  line(Z, 218, 420, 220, 475, 2, .8);
  blob(Z, 525, 352, 8, 12, 70);
  blob(Z, 620, 408, 30, 22, 320);
  blob(Z, 505, 410, 14, 14, 140);
  blob(Z, 545, 415, 15, 15, 180);
  blob(Z, 360, 420, 10, 14, 60);
  blob(Z, 400, 412, 12, 8, 60);
  blob(Z, 460, 420, 22, 18, 120);
  scatter(Z, 320, 395, 590, 465, 130);
  scatter(Z, 470, 330, 620, 400, 120);
  for (var s = 0; s < 17; s++) {
    var fx = 485 + s * 9.500;
    line(Z, fx, 497 + s * .2, fx + 30 - s * 1.300, 558 - s * 1.500, 1.500, .78);
  }
  blob(Z, 640, 582, 10, 14, 80);
  blob(Z, 575, 570, 13, 8, 50);
  blob(Z, 525, 585, 8, 6, 20);
  scatter(Z, 390, 560, 640, 610, 35);
  line(Z, 285, 468, 305, 470, 4);

  /* south-west wall */
  line(Z, 260, 684, 700, 676, 2.500, .9);
  for (var t = 0; t < 11; t++) {
    var tx = 545 + t * 14.500;
    line(Z, tx, 678, tx + 18 * (t % 2 ? -.6 : .8), 712 - (t % 3) * 6, 5, .9);
  }
  line(Z, 708, 670, 711, 862, 2.500);
  blob(Z, 685, 700, 8, 12, 50);
  line(Z, 665, 745, 705, 745, 1.500, .6);
  scatter(Z, 100, 560, 560, 830, 50);

  /* south fan */
  for (var h = 0; h < 20; h++) {
    var fy = 625 + h * 10;
    line(Z, 800 + h * 1.500 - (h > 8 ? 12 : 0), fy, 860 - h * .2, fy - 3, 1.500, .78);
  }
  poly(Z, [[800,610],[880,610],[870,660],[810,670]], 6);
  blob(Z, 870, 690, 14, 22, 260);
  blob(Z, 875, 795, 10, 15, 190);
  blob(Z, 880, 892, 14, 9, 70);
  line(Z, 915, 640, 917, 910, 2, .55);
  line(Z, 815, 810, 817, 1000, 2, .35);
  blob(Z, 1022, 630, 6, 7, 60);
  scatter(Z, 920, 620, 1040, 790, 50);
  scatter(Z, 860, 940, 960, 1000, 40);
  scatter(Z, 1020, 960, 1050, 1000, 8);
  scatter(O, 970, 625, 1000, 632, 5);

  /* east arm */
  blob(Z, 990, 540, 30, 11, 220);
  for (var e = 0; e < 8; e++) line(Z, 950 + e * 10, 515, 945 + e * 11, 570, 2, .7);
  blob(Z, 1070, 548, 12, 6, 40);
  blob(Z, 1000, 488, 12, 6, 40);
  blob(Z, 1130, 478, 24, 8, 60);
  scatter(Z, 1050, 510, 1500, 590, 45);
  scatter(Z, 1040, 600, 1520, 740, 35);

  /* south-east wall */
  line(Z, 1005, 808, 1240, 800, 3);
  line(Z, 1240, 798, 1460, 797, 2.500);
  blob(Z, 1240, 800, 100, 4, 240);
  blob(Z, 1320, 798, 40, 4, 120);
  blob(Z, 1238, 825, 5, 12, 40);
  line(Z, 1015, 820, 1018, 905, 4);
  line(Z, 1375, 738, 1375, 785, 2);
  line(Z, 1375, 738, 1480, 735, 1.500, .45);
  line(Z, 1060, 810, 1075, 830, 3, .7);
  line(Z, 1145, 802, 1170, 820, 4, .8);

  /* north-east structure */
  line(Z, 1313, 205, 1313, 242, 3);
  line(Z, 1313, 240, 1365, 240, 2);
  line(Z, 1362, 242, 1360, 305, 1.500);
  line(Z, 1330, 285, 1330, 318, 2);
  line(Z, 1332, 130, 1332, 180, 1.500, .7);
  line(Z, 1340, 208, 1410, 210, 2, .6);
  line(Z, 1185, 40, 1195, 90, 3, .6);
  scatter(Z, 1040, 100, 1400, 480, 40);
})();
```
